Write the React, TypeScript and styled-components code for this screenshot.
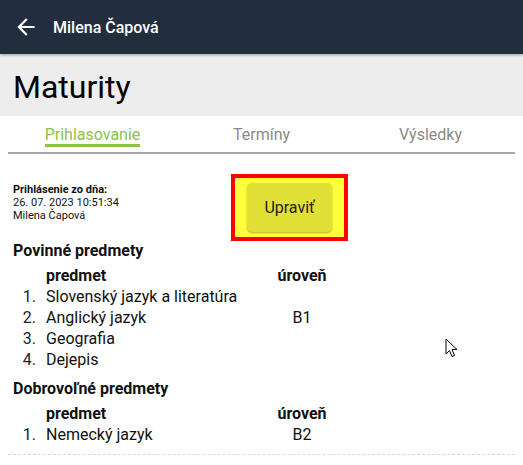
import React from "react";
import styled, { createGlobalStyle } from "styled-components";

const GlobalStyle = createGlobalStyle`
  html, body { margin: 0; padding: 0; background: #ffffff; }
  body { font-family: Roboto, "Noto Sans", Arial, sans-serif; color: #111; }
  * { box-sizing: border-box; }
`;

const Page = styled.div`
  position: relative;
  width: 523px;
  min-height: 465px;
  overflow: hidden;
`;

const Header = styled.header`
  height: 54px;
  background: #222d3d;
  display: flex;
  align-items: center;
  padding-left: 13px;
  gap: 14px;
  box-shadow: 0 1px 3px rgba(0, 0, 0, 0.35);
  position: relative;
  z-index: 1;
`;

const BackIcon = styled.svg`
  display: block;
  flex: none;
`;

const HeaderTitle = styled.span`
  color: #ffffff;
  font-size: 16px;
  font-weight: 500;
`;

const TitleBar = styled.div`
  height: 62px;
  background: #ededed;
  display: flex;
  align-items: center;
  padding-left: 13px;
`;

const PageTitle = styled.h1`
  margin: 0;
  font-size: 32px;
  font-weight: 400;
  color: #000;
  line-height: 1;
  padding-top: 4px;
`;

const Content = styled.div`
  padding: 0 8px;
`;

const Tabs = styled.nav`
  display: grid;
  grid-template-columns: repeat(3, 1fr);
  border-bottom: 2px solid #a6a6a6;
  padding: 9px 0 5px;
`;

const Tab = styled.div`
  display: flex;
  justify-content: center;
`;

const TabLabel = styled.span<{ $active?: boolean }>`
  font-size: 16px;
  line-height: 19px;
  color: ${(p) => (p.$active ? "#8bc34a" : "#8a8a8a")};
  border-bottom: 3px solid ${(p) => (p.$active ? "#8bc34a" : "transparent")};
`;

const InfoRow = styled.div`
  display: flex;
  align-items: flex-start;
  padding: 20px 0 0 5px;
`;

const Info = styled.div`
  width: 218px;
  padding-top: 9px;
  font-size: 11px;
  line-height: 13px;
  color: #111;
`;

const InfoLabel = styled.div`
  font-weight: 700;
`;

const Highlight = styled.div`
  border: 4px solid #ff0000;
  background: #ffff3c;
  padding: 5px 12px;
  width: 117px;
`;

const Button = styled.button`
  width: 85px;
  height: 49px;
  border: none;
  border-radius: 5px;
  background: #e1e034;
  box-shadow: 0 1px 2px rgba(0, 0, 0, 0.3);
  font-family: Roboto, Arial, sans-serif;
  font-size: 16px;
  color: #222;
  cursor: pointer;
`;

const Section = styled.section<{ $gap?: number }>`
  padding-left: 5px;
  margin-top: ${(p) => p.$gap ?? 0}px;
`;

const SectionTitle = styled.h2`
  margin: 0 0 5px;
  font-size: 16px;
  line-height: 19px;
  font-weight: 700;
  color: #111;
`;

const Grid = styled.div`
  display: grid;
  grid-template-columns: 33px 231px 50px;
  font-size: 16px;
  line-height: 21px;
  color: #111;
`;

const HeadCell = styled.div<{ $center?: boolean }>`
  font-weight: 700;
  text-align: ${(p) => (p.$center ? "center" : "left")};
`;

const NumCell = styled.div`
  text-align: right;
  padding-right: 10px;
  color: #222;
`;

const Cell = styled.div<{ $center?: boolean }>`
  text-align: ${(p) => (p.$center ? "center" : "left")};
`;

const Footer = styled.div`
  margin-top: 9px;
  border-top: 1px dashed #d8d8d8;
`;

const Cursor = styled.svg`
  position: absolute;
  left: 445px;
  top: 338px;
`;

type Row = { name: string; level?: string };

const Subjects: React.FC<{ rows: Row[] }> = ({ rows }) => (
  <Grid>
    <div />
    <HeadCell>predmet</HeadCell>
    <HeadCell $center>úroveň</HeadCell>
    {rows.map((r, i) => (
      <React.Fragment key={r.name}>
        <NumCell>{i + 1}.</NumCell>
        <Cell>{r.name}</Cell>
        <Cell $center>{r.level ?? ""}</Cell>
      </React.Fragment>
    ))}
  </Grid>
);

export default function App() {
  return (
    <Page>
      <GlobalStyle />
      <Header>
        <BackIcon width="26" height="26" viewBox="0 0 24 24" aria-hidden>
          <path
            d="M20 11H7.83l5.59-5.59L12 4l-8 8 8 8 1.41-1.41L7.83 13H20v-2z"
            fill="#ffffff"
          />
        </BackIcon>
        <HeaderTitle>Milena Čapová</HeaderTitle>
      </Header>
      <TitleBar>
        <PageTitle>Maturity</PageTitle>
      </TitleBar>
      <Content>
        <Tabs>
          <Tab>
            <TabLabel $active>Prihlasovanie</TabLabel>
          </Tab>
          <Tab>
            <TabLabel>Termíny</TabLabel>
          </Tab>
          <Tab>
            <TabLabel>Výsledky</TabLabel>
          </Tab>
        </Tabs>
        <InfoRow>
          <Info>
            <InfoLabel>Prihlásenie zo dňa:</InfoLabel>
            <div>26. 07. 2023 10:51:34</div>
            <div>Milena Čapová</div>
          </Info>
          <Highlight>
            <Button>Upraviť</Button>
          </Highlight>
        </InfoRow>
        <Section>
          <SectionTitle>Povinné predmety</SectionTitle>
          <Subjects
            rows={[
              { name: "Slovenský jazyk a literatúra" },
              { name: "Anglický jazyk", level: "B1" },
              { name: "Geografia" },
              { name: "Dejepis" },
            ]}
          />
        </Section>
        <Section $gap={9}>
          <SectionTitle>Dobrovoľné predmety</SectionTitle>
          <Subjects rows={[{ name: "Nemecký jazyk", level: "B2" }]} />
        </Section>
        <Footer />
      </Content>
      <Cursor width="14" height="21" viewBox="0 0 14 21" aria-hidden>
        <path
          d="M1 1 L1 16 L4.5 12.5 L7 18.5 L9.5 17.5 L7 11.5 L12 11.5 Z"
          fill="#ffffff"
          stroke="#000000"
          strokeWidth="1"
          strokeLinejoin="miter"
        />
      </Cursor>
    </Page>
  );
}
